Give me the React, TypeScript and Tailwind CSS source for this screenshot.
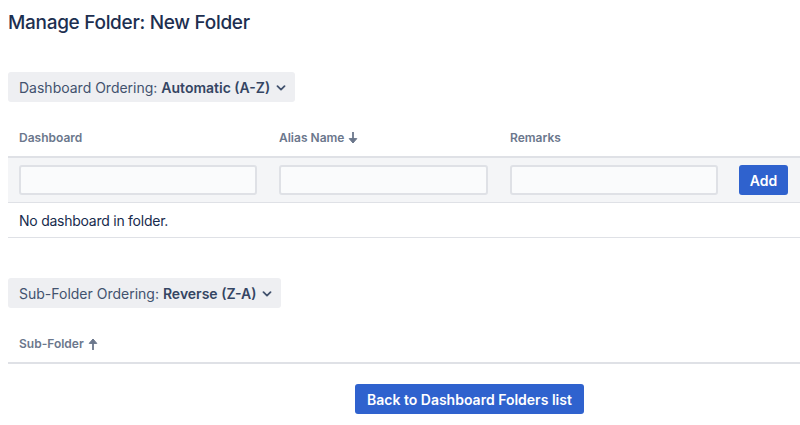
import { ReactNode } from 'react';

const font = { fontFamily: 'Inter, "Noto Sans", sans-serif' };

function Chevron() {
  return (
    <svg width="10" height="6" viewBox="0 0 10 6" className="ml-[6px] mt-[1px]">
      <path d="M1.5 1.2 5 4.6 8.5 1.2" fill="none" stroke="#42526E" strokeWidth="1.8" strokeLinecap="round" strokeLinejoin="round" />
    </svg>
  );
}

function Arrow({ up }: { up?: boolean }) {
  return (
    <svg width="10" height="12" viewBox="0 0 10 12" className={up ? 'ml-[4px]' : 'ml-[4px]'}>
      <g transform={up ? 'rotate(180 5 6)' : undefined}>
        <path d="M5 0.5v9" stroke="#6B778C" strokeWidth="1.8" strokeLinecap="round" />
        <path d="M1.2 6.6 5 11 8.8 6.6Z" fill="#6B778C" stroke="#6B778C" strokeWidth="1" strokeLinejoin="round" />
      </g>
    </svg>
  );
}

function OrderingButton({ label, value }: { label: string; value: string }) {
  return (
    <button className="flex h-[30px] items-center rounded-[3px] bg-[#EEEFF2] pl-[11px] pr-[9px] text-[14px] text-[#42526E]">
      <span>
        {label} <span className="font-semibold text-[#344563]">{value}</span>
      </span>
      <Chevron />
    </button>
  );
}

function Th({ children }: { children: ReactNode }) {
  return <div className="flex items-center px-[11px] text-[12px] font-semibold text-[#6B778C]">{children}</div>;
}

function Field() {
  return (
    <div className="px-[11px]">
      <input className="h-[30px] w-full rounded-[3px] border-2 border-[#DFE1E6] bg-[#FAFBFC] outline-none" />
    </div>
  );
}

export default function App() {
  return (
    <div className="min-h-[425px] bg-white px-2 pt-[11px]" style={font}>
      <h1 className="text-[19px] font-medium leading-6 tracking-[-0.3px] text-[#1D2F50]">Manage Folder: New Folder</h1>

      <div className="mt-[37px] flex">
        <OrderingButton label="Dashboard Ordering:" value="Automatic (A-Z)" />
      </div>

      <div className="mt-[18px] w-[792px]">
        <div className="grid h-[38px] grid-cols-[260px_231px_230px_71px] border-b-2 border-[#DFE1E6]">
          <Th>Dashboard</Th>
          <Th>
            Alias Name
            <Arrow />
          </Th>
          <Th>Remarks</Th>
          <div />
        </div>
        <div className="grid h-[45px] grid-cols-[260px_231px_230px_71px] items-center border-b border-[#DFE1E6] bg-[#F4F5F7]">
          <Field />
          <Field />
          <Field />
          <div className="px-[10px]">
            <button className="h-[30px] w-[49px] rounded-[3px] bg-[#2F62CE] text-[14px] font-semibold text-white">Add</button>
          </div>
        </div>
        <div className="flex h-[35px] items-center border-b border-[#DFE1E6] px-[11px] text-[14px] tracking-[-0.25px] text-[#172B4D]">
          No dashboard in folder.
        </div>
      </div>

      <div className="mt-[40px] flex">
        <OrderingButton label="Sub-Folder Ordering:" value="Reverse (Z-A)" />
      </div>

      <div className="mt-[18px] flex h-[38px] w-[792px] border-b-2 border-[#DFE1E6]">
        <Th>
          Sub-Folder
          <Arrow up />
        </Th>
      </div>

      <div className="mt-[20px] flex pl-[347px]">
        <button className="h-[30px] rounded-[3px] bg-[#2F62CE] px-[12px] text-[14px] font-semibold text-white">
          Back to Dashboard Folders list
        </button>
      </div>
    </div>
  );
}
